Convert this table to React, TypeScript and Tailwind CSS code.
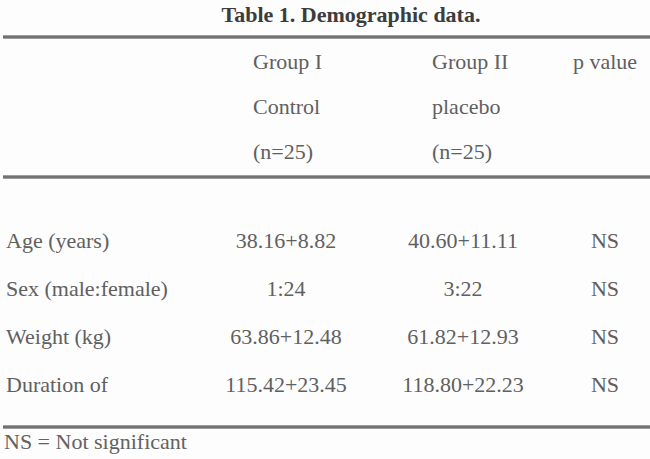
import React from "react";

const rows = [
  { label: "Age (years)", a: "38.16+8.82", b: "40.60+11.11", p: "NS" },
  { label: "Sex (male:female)", a: "1:24", b: "3:22", p: "NS" },
  { label: "Weight (kg)", a: "63.86+12.48", b: "61.82+12.93", p: "NS" },
  { label: "Duration of", a: "115.42+23.45", b: "118.80+22.23", p: "NS" },
];

const header = [
  ["Group I", "Group II", "p value"],
  ["Control", "placebo", ""],
  ["(n=25)", "(n=25)", ""],
];

function Rule() {
  return <div className="ml-[3px] h-[4px] bg-linear-to-b from-[#b4b4b4] via-[#5e5e5e] to-[#b4b4b4]" />;
}

export default function App() {
  return (
    <div
      className="w-[650px] h-[459px] overflow-hidden bg-[#fdfdfd] text-[22px] text-[#606060]"
      style={{ fontFamily: '"Liberation Serif", "Times New Roman", serif' }}
    >
      <div className="flex h-[35px] justify-center pl-[52px] pt-[1px] leading-[28px] font-bold text-[#3c3c3c]">
        Table 1. Demographic data.
      </div>
      <Rule />
      <div className="flex flex-col pl-[6px]">
        {header.map((h, i) => (
          <div key={i} className="grid h-[45px] grid-cols-[219px_122px_232px_52px] items-center leading-[45px]">
            <div />
            <div className="whitespace-nowrap pl-[28px]">{h[0]}</div>
            <div className="whitespace-nowrap pl-[85px]">{h[1]}</div>
            <div className="flex justify-center whitespace-nowrap">{h[2]}</div>
          </div>
        ))}
      </div>
      <div className="mt-[1px]">
        <Rule />
      </div>
      <div className="flex flex-col pl-[6px] pt-[38px]">
        {rows.map((r) => (
          <div key={r.label} className="grid h-[48px] grid-cols-[219px_122px_232px_52px] items-center leading-[48px]">
            <div className="whitespace-nowrap">{r.label}</div>
            <div className="flex justify-center whitespace-nowrap">{r.a}</div>
            <div className="flex justify-center whitespace-nowrap">{r.b}</div>
            <div className="flex justify-center whitespace-nowrap">{r.p}</div>
          </div>
        ))}
      </div>
      <div className="mt-[16px]">
        <Rule />
      </div>
      <div className="h-[28px] pl-[4px] leading-[26px] text-[#626262]">NS = Not significant</div>
    </div>
  );
}
